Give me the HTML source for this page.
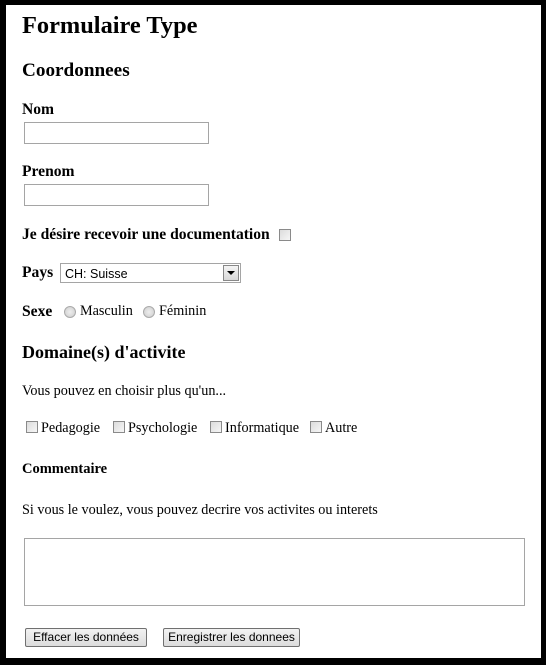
<!DOCTYPE html>
<html><head><meta charset="utf-8"><style>
body{margin:0;width:546px;height:665px;background:#fff;position:relative;overflow:hidden;font-family:"Liberation Serif",serif;color:#000}
.frame{position:absolute;left:0;top:0;width:546px;height:665px;box-sizing:border-box;border:5px solid #000;border-left-width:6px;border-bottom-width:7px}
.a{position:absolute;white-space:nowrap;line-height:1}
.b{font-weight:bold;font-size:15.6px}
.n{font-size:14.2px}
.inp{position:absolute;border:1px solid #a5a5a5;background:#fff;box-sizing:border-box}
.cb{position:absolute;width:12px;height:12px;box-sizing:border-box;border:1px solid #8a8a8a;background:linear-gradient(135deg,#dcdcdc,#f6f6f6)}
.rd{position:absolute;width:12px;height:12px;box-sizing:border-box;border:1px solid #aaa;border-radius:50%;background:radial-gradient(#eee,#ccc)}
.btn{position:absolute;height:19px;box-sizing:border-box;border:1px solid #707070;border-radius:2px;background:linear-gradient(#f2f2f2,#dcdcdc);font-family:"Liberation Sans",sans-serif;font-size:12px;line-height:17px;text-align:center}
</style></head><body>
<div class="frame"></div>
<div class="a" style="left:22px;top:14px;font-size:24.4px;font-weight:bold">Formulaire Type</div>
<div class="a" style="left:22px;top:61px;font-size:19.2px;font-weight:bold">Coordonnees</div>
<div class="a b" style="left:22px;top:102px">Nom</div>
<div class="inp" style="left:24px;top:122px;width:185px;height:22px"></div>
<div class="a b" style="left:22px;top:164px">Prenom</div>
<div class="inp" style="left:24px;top:184px;width:185px;height:22px"></div>
<div class="a b" style="left:22px;top:227px">Je désire recevoir une documentation</div>
<div class="cb" style="left:279px;top:229px"></div>
<div class="a b" style="left:22px;top:265px">Pays</div>
<div class="inp" style="left:60px;top:263px;width:181px;height:20px;font-family:'Liberation Sans',sans-serif;font-size:12.5px;padding:3px 0 0 4px">CH: Suisse</div>
<div style="position:absolute;left:223px;top:265px;width:16px;height:16px;box-sizing:border-box;border:1px solid #888;background:linear-gradient(#f4f4f4,#d8d8d8)"><div style="position:absolute;left:3px;top:5px;width:0;height:0;border-left:4px solid transparent;border-right:4px solid transparent;border-top:4px solid #000"></div></div>
<div class="a b" style="left:22px;top:304px">Sexe</div>
<div class="rd" style="left:64px;top:306px"></div>
<div class="a n" style="left:80px;top:304px">Masculin</div>
<div class="rd" style="left:143px;top:306px"></div>
<div class="a n" style="left:159px;top:304px">Féminin</div>
<div class="a" style="left:22px;top:343px;font-size:18px;font-weight:bold">Domaine(s) d'activite</div>
<div class="a n" style="left:22px;top:384px">Vous pouvez en choisir plus qu'un...</div>
<div class="cb" style="left:26px;top:421px"></div><div class="a n" style="left:41px;top:421px">Pedagogie</div>
<div class="cb" style="left:113px;top:421px"></div><div class="a n" style="left:128px;top:421px">Psychologie</div>
<div class="cb" style="left:210px;top:421px"></div><div class="a n" style="left:225px;top:421px">Informatique</div>
<div class="cb" style="left:310px;top:421px"></div><div class="a n" style="left:325px;top:421px">Autre</div>
<div class="a" style="left:22px;top:462px;font-size:14.5px;font-weight:bold">Commentaire</div>
<div class="a n" style="left:22px;top:503px">Si vous le voulez, vous pouvez decrire vos activites ou interets</div>
<div class="inp" style="left:24px;top:538px;width:501px;height:68px"></div>
<div class="btn" style="left:25px;top:628px;width:122px">Effacer les données</div>
<div class="btn" style="left:163px;top:628px;width:137px">Enregistrer les donnees</div>
</body></html>
